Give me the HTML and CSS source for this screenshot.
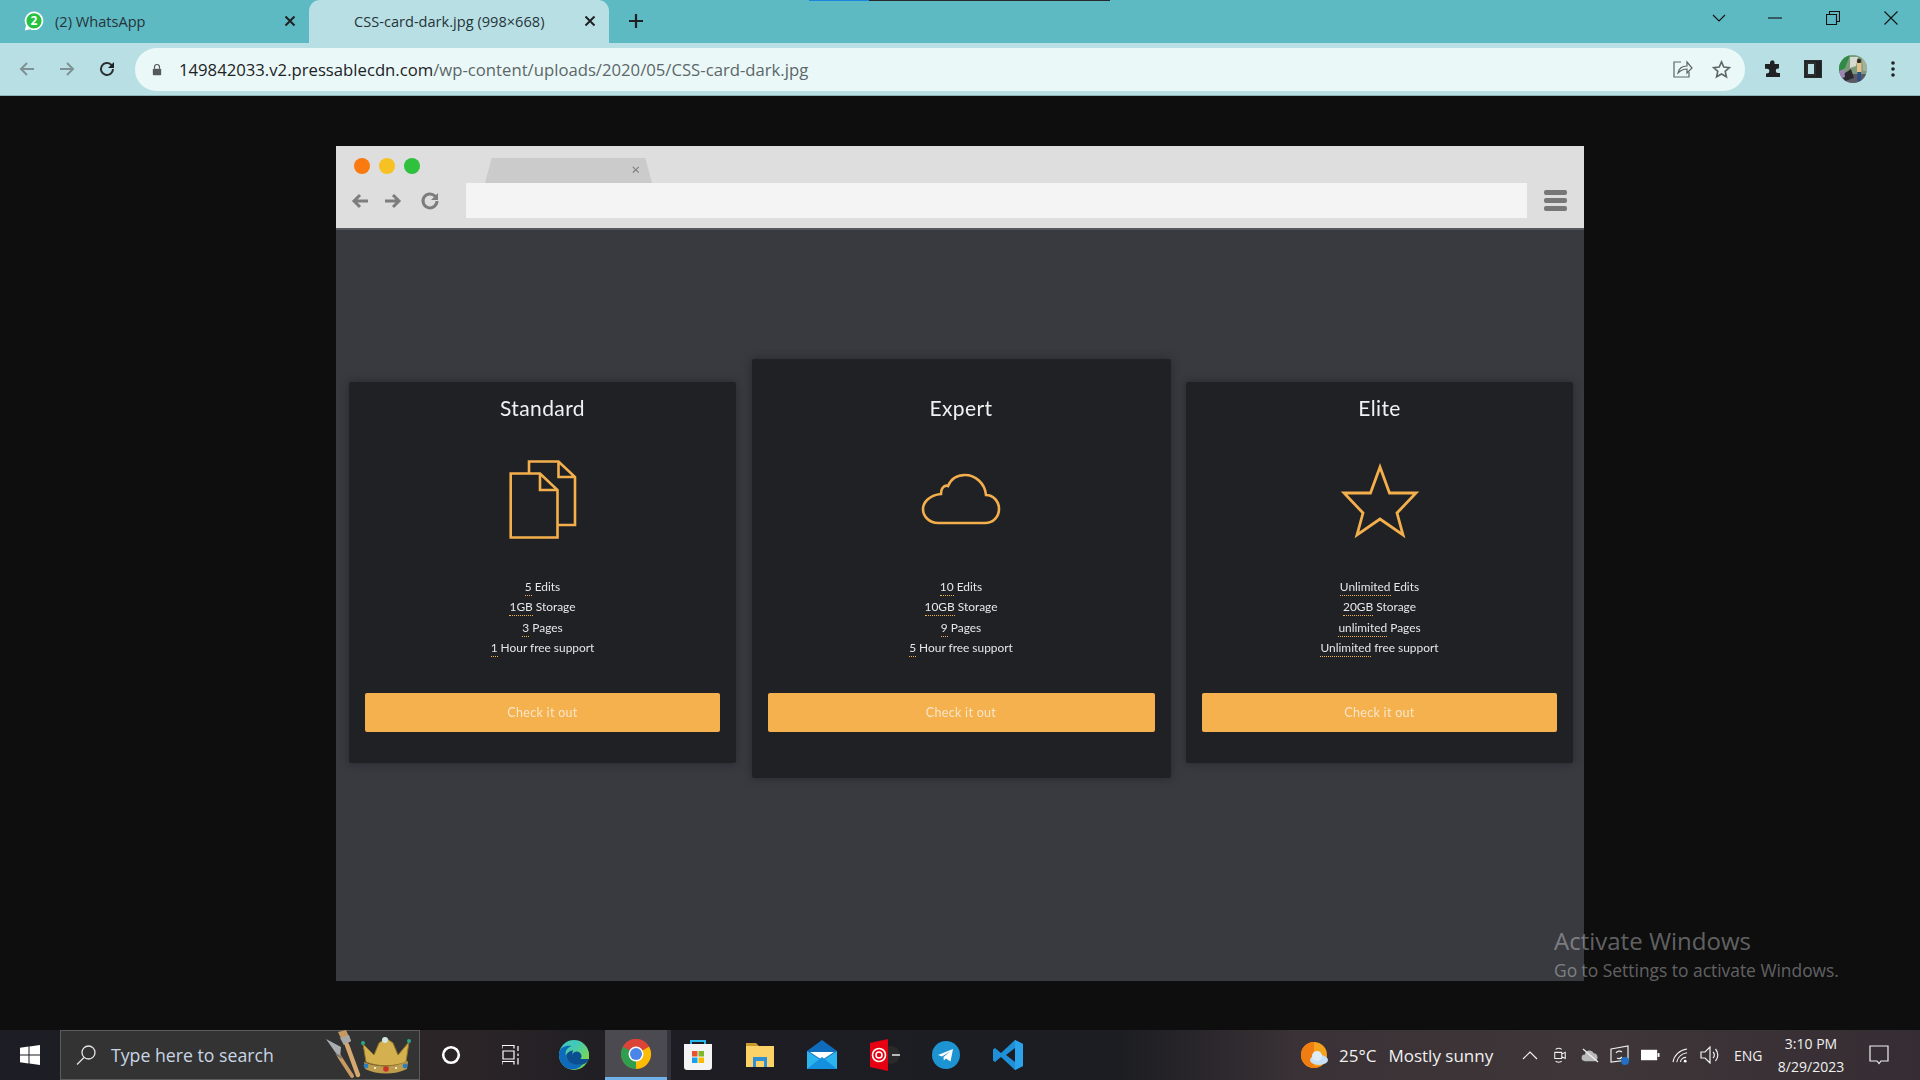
FILE: index.html
```html
<!DOCTYPE html>
<html lang="en">
<head>
<meta charset="utf-8">
<title>CSS-card-dark.jpg (998×668)</title>
<link rel="stylesheet" href="styles.css">
</head>
<body>
<div class="load-line"><span class="load-blue"></span><span class="load-dark"></span></div>

<header class="tabstrip">
  <div class="tab">
    <svg class="favicon" viewBox="0 0 20 20" width="20" height="20"><path d="M10 .5a9.3 9.3 0 0 0-8 14L.8 19.5l5.2-1.3A9.3 9.3 0 1 0 10 .5z" fill="#fff"/><circle cx="10" cy="9.8" r="7.6" fill="#25c13f"/><text x="10" y="14" text-anchor="middle" class="fav-num">2</text></svg>
    <span class="tab-title">(2) WhatsApp</span>
    <svg class="tab-close" viewBox="0 0 12 12" width="12" height="12"><path d="M1.5 1.5l9 9M10.5 1.5l-9 9"/></svg>
  </div>
  <div class="tab tab-active">
    <span class="tab-title">CSS-card-dark.jpg (998×668)</span>
    <svg class="tab-close" viewBox="0 0 12 12" width="12" height="12"><path d="M1.5 1.5l9 9M10.5 1.5l-9 9"/></svg>
  </div>
  <svg class="new-tab" viewBox="0 0 16 16" width="16" height="16"><path d="M8 1v14M1 8h14"/></svg>
  <div class="win-controls">
    <div class="win-btn win-chev"><svg viewBox="0 0 14 8" width="14" height="8"><path d="M1 1l6 6 6-6"/></svg></div>
    <div class="win-btn"><svg viewBox="0 0 14 2" width="14" height="2"><path d="M0 1h14"/></svg></div>
    <div class="win-btn"><svg viewBox="0 0 14 14" width="14" height="14"><path d="M.5 3.5h10v10H.5zM3.5 3.5V.5h10v10h-3"/></svg></div>
    <div class="win-btn"><svg viewBox="0 0 14 14" width="14" height="14"><path d="M.5.5l13 13M13.5.5l-13 13"/></svg></div>
  </div>
</header>

<nav class="toolbar">
  <div class="tool-btn tool-dim"><svg viewBox="0 0 16 16" width="16" height="16"><path d="M15 8H2M8 2L2 8l6 6"/></svg></div>
  <div class="tool-btn tool-dim"><svg viewBox="0 0 16 16" width="16" height="16"><path d="M1 8h13M8 2l6 6-6 6"/></svg></div>
  <div class="tool-btn"><svg viewBox="0 0 16 16" width="16" height="16"><path d="M14 8a6 6 0 1 1-1.8-4.3L14 5.5"/><path class="fill-dark" d="M15 1v6H9z"/></svg></div>
  <div class="omnibox">
    <svg class="lock" viewBox="0 0 12 14" width="10" height="13"><path d="M3 6V4a3 3 0 0 1 6 0v2" fill="none" stroke="#55595a" stroke-width="1.4"/><rect x="1" y="6" width="10" height="8" rx="1" fill="#55595a"/></svg>
    <span class="url"><span class="url-host">149842033.v2.pressablecdn.com</span>/wp-content/uploads/2020/05/CSS-card-dark.jpg</span>
    <svg class="omni-ico share" viewBox="0 0 20 18" width="20" height="18"><path d="M8 2H1v15h15v-5"/><path d="M5 13c1-5 5-7 9-7V2l5 6-5 5V9c-4 0-6 1-9 4z"/></svg>
    <svg class="omni-ico" viewBox="0 0 20 20" width="19" height="19"><path d="M10 2l2.4 5.4 5.9.6-4.4 3.9 1.3 5.8L10 14.7l-5.2 3 1.3-5.8L1.7 8l5.9-.6z"/></svg>
  </div>
  <div class="tool-btn"><svg viewBox="0 0 18 18" width="18" height="18"><path class="fill-dark" d="M7 1a2 2 0 0 1 3.5 1.5V4H15v4.5h-1a2.2 2.2 0 1 0 0 4.5h2V17H2v-3.5h1a2.4 2.4 0 0 0 0-4.8H1V4h5V2.5A2 2 0 0 1 7 1z"/></svg></div>
  <div class="tool-btn"><svg viewBox="0 0 18 18" width="18" height="18"><rect width="18" height="18" rx="1" fill="#202124"/><rect x="3" y="3" width="8" height="12" fill="#b8e0e4"/></svg></div>
  <div class="tool-btn"><svg class="avatar" viewBox="0 0 28 28" width="28" height="28"><defs><clipPath id="av"><circle cx="14" cy="14" r="14"/></clipPath></defs><g clip-path="url(#av)"><rect width="28" height="28" fill="#7c9a7a"/><rect y="19" width="28" height="9" fill="#5c5966"/><path d="M0 0h11L6 13 0 18z" fill="#2f8a45"/><path d="M11 2l8 0-2 9-6 2z" fill="#d4dcd2"/><path d="M3 20l9-6 3 9-9 3z" fill="#2a2a30"/><path d="M0 16l5-2 1 8-6 2z" fill="#a184b8"/><circle cx="20" cy="6" r="2.200" fill="#3a2b22"/><rect x="18" y="8" width="4.400" height="9" fill="#e4c08c"/><rect x="18.400" y="17" width="3.600" height="9" fill="#2b4f86"/><path d="M23 4h5v12h-4z" fill="#a2b19b"/></g></svg></div>
  <div class="tool-btn"><svg viewBox="0 0 4 16" width="4" height="16"><circle class="fill-dark" cx="2" cy="2" r="1.8"/><circle class="fill-dark" cx="2" cy="8" r="1.8"/><circle class="fill-dark" cx="2" cy="14" r="1.8"/></svg></div>
</nav>

<main class="viewer">
  <section class="shot">
    <div class="mock-bar">
      <div class="mock-top">
        <span class="dot dot-red"></span><span class="dot dot-yellow"></span><span class="dot dot-green"></span>
        <div class="mock-tab"><span class="mock-x">×</span></div>
      </div>
      <div class="mock-nav">
        <svg class="mock-ico" viewBox="0 0 18 16" width="18" height="16"><path d="M17 8H3M9 2L3 8l6 6"/></svg>
        <svg class="mock-ico" viewBox="0 0 18 16" width="18" height="16"><path d="M1 8h14M9 2l6 6-6 6"/></svg>
        <svg class="mock-ico mock-reload" viewBox="0 0 20 20" width="20" height="20"><path d="M17 10a7 7 0 1 1-2-5l2 2"/><path class="fill-grey" d="M18 2v7h-7z"/></svg>
        <div class="mock-address"></div>
        <div class="mock-menu"><span></span><span></span><span></span></div>
      </div>
    </div>

    <div class="plans">
      <article class="card">
        <h2 class="card-title">Standard</h2>
        <div class="card-icon">
          <svg viewBox="161 88 84 84" width="84" height="84"><path d="M170.7 103.5H200L217.5 120V167.5H170.7ZM200 103.5V120H217.5M189 103.5V91.5H218.5L235 107V155H217.5M218.5 91.5V107H235"/></svg>
        </div>
        <ul class="features">
          <li><span class="term">5</span> Edits</li>
          <li><span class="term">1GB</span> Storage</li>
          <li><span class="term">3</span> Pages</li>
          <li><span class="term">1</span> Hour free support</li>
        </ul>
        <button class="cta">Check it out</button>
      </article>

      <article class="card card-featured">
        <h2 class="card-title">Expert</h2>
        <div class="card-icon">
          <svg viewBox="0 0 84 84" width="84" height="84"><path d="M19 65H66C75 65 80 58 80 51C80 43 74 37 67 37C66 25 56 17 46 17C38 17 32 21 29 28C27 27 25 28 23.500 30C22 32 22 34 22 36C11 37 4 44 4 51C4 59 11 65 19 65Z"/></svg>
        </div>
        <ul class="features">
          <li><span class="term">10</span> Edits</li>
          <li><span class="term">10GB</span> Storage</li>
          <li><span class="term">9</span> Pages</li>
          <li><span class="term">5</span> Hour free support</li>
        </ul>
        <button class="cta">Check it out</button>
      </article>

      <article class="card">
        <h2 class="card-title">Elite</h2>
        <div class="card-icon">
          <svg viewBox="0 0 84 84" width="84" height="84"><path class="star" d="M42 9L51.500 35H78L59 55L65 77L42 61L19 77L25 55L6 35H32.500Z"/></svg>
        </div>
        <ul class="features">
          <li><span class="term">Unlimited</span> Edits</li>
          <li><span class="term">20GB</span> Storage</li>
          <li><span class="term">unlimited</span> Pages</li>
          <li><span class="term">Unlimited</span> free support</li>
        </ul>
        <button class="cta">Check it out</button>
      </article>
    </div>
  </section>

  <div class="activate">
    <div class="activate-title">Activate Windows</div>
    <div class="activate-sub">Go to Settings to activate Windows.</div>
  </div>
</main>

<footer class="taskbar">
  <div class="start"><svg viewBox="0 0 20 20" width="20" height="20"><path fill="#fff" d="M0 2.800L8.500 1.600V9.500H0ZM9.500 1.500L20 0V9.500H9.500ZM0 10.500H8.500V18.400L0 17.200ZM9.500 10.500H20V20L9.500 18.500Z"/></svg></div>
  <div class="search">
    <svg class="search-ico" viewBox="0 0 20 20" width="20" height="20"><circle cx="12.500" cy="7.500" r="6.500"/><path d="M8 12.500L1 19.500"/></svg>
    <span class="search-text">Type here to search</span>
    <svg class="search-art" viewBox="0 0 90 50" width="90" height="50">
      <path d="M2 9L17 17L16 29Z" fill="#a9aeb3"/><path d="M15 26L28 46" stroke="#c89a62" stroke-width="4" stroke-linecap="round"/><path d="M12 24L18 28" stroke="#777" stroke-width="2"/>
      <path d="M14 2L22 0L27 11L20 15Z" fill="#c49a62"/><path d="M16 8L25 5L27 11L20 15Z" fill="#a8a8a8"/><path d="M23 15L34 45" stroke="#d5a870" stroke-width="4.500" stroke-linecap="round"/>
      <path d="M42 32L39 14L50 25L55 13L62 8L69 13L74 25L85 12L82 32C70 37 54 37 42 32Z" fill="#d4b04f" stroke="#8f7428"/>
      <path d="M40 32C54 38 70 38 84 31L83 39C70 45 54 45 41 39Z" fill="#bd9c4c"/>
      <circle cx="39" cy="13" r="2" fill="#2aa88c"/><circle cx="85" cy="11" r="2" fill="#2aa88c"/><circle cx="61" cy="10" r="3" fill="#cfe6e6"/>
      <circle cx="42" cy="36" r="2.400" fill="#2a7fc0"/><circle cx="62" cy="39" r="2.800" fill="#cc3327"/><circle cx="81" cy="36" r="2.400" fill="#2a7fc0"/>
      <circle cx="51" cy="38" r="1" fill="#fff"/><circle cx="72" cy="38" r="1" fill="#fff"/>
    </svg>
  </div>
  <div class="task-cell"><svg viewBox="0 0 20 20" width="20" height="20"><circle cx="10" cy="10" r="7.800" fill="none" stroke="#fff" stroke-width="2.600"/></svg></div>
  <div class="task-cell"><svg class="line-ico" viewBox="0 0 20 20" width="20" height="20"><path d="M0 .5H12V3.500M12 .5M0 3.500V.5M1 6H12V14H1ZM0 19.500V16.500H12V19.500M16 1V6M16 8.500V11M16 13V19.500"/></svg></div>
  <div class="app-cell"><svg viewBox="0 0 32 32" width="32" height="32"><defs><linearGradient id="ed1" x1="0" y1="0" x2="1" y2="1"><stop offset="0" stop-color="#30c4d8"/><stop offset="1" stop-color="#7fd84a"/></linearGradient></defs><circle cx="16" cy="16" r="15" fill="url(#ed1)"/><path d="M1 16C1 8 8 6 14 7C8 9 7 13 8 17C9 23 16 27 25 25C21 30 16 31 12 30C6 29 1 23 1 16Z" fill="#0e6bbb"/><path d="M8 17C9 12 16 9 21 13C24 15 24 18 23 20H31C30 23 28 24 26 25C20 27 10 26 8 17Z" fill="#0b4f91"/><path d="M14 18a5 5 0 0 1 10-1c0 1.500-1 2.500-2 3h9v-5C30 8 24 2 16 2" fill="url(#ed1)"/></svg></div>
  <div class="app-cell app-active"><svg viewBox="0 0 32 32" width="32" height="32"><circle cx="16" cy="16" r="15" fill="#db4437"/><path d="M16 16L29 8.500A15 15 0 0 1 16 31Z" fill="#fbbc05"/><path d="M16 16L16 31A15 15 0 0 1 3 8.500Z" fill="#2f9e4d"/><path d="M16 16L3 8.500A15 15 0 0 1 29 8.500Z" fill="#db4437"/><circle cx="16" cy="16" r="7.500" fill="#fff"/><circle cx="16" cy="16" r="6" fill="#4a86e8"/></svg></div>
  <div class="app-cell"><svg viewBox="0 0 30 32" width="30" height="32"><path d="M8 6V2H22V6" fill="none" stroke="#29b6e8" stroke-width="2"/><path d="M1 5H29V28a3 3 0 0 1-3 3H4a3 3 0 0 1-3-3Z" fill="#f4f4f4"/><rect x="9" y="12" width="5.500" height="5.500" fill="#e8502f"/><rect x="15.500" y="12" width="5.500" height="5.500" fill="#7db928"/><rect x="9" y="18.500" width="5.500" height="5.500" fill="#18a0e8"/><rect x="15.500" y="18.500" width="5.500" height="5.500" fill="#fbb900"/></svg></div>
  <div class="app-cell"><svg viewBox="0 0 30 28" width="30" height="28"><path d="M1 2H11L14 5H29V26H1Z" fill="#c99a2e"/><path d="M1 5H29V26H1Z" fill="#fbd268"/><path d="M8 26V16H22V26H19V20H11V26Z" fill="#2e8fd4"/></svg></div>
  <div class="app-cell"><svg viewBox="0 0 32 30" width="32" height="30"><path d="M1 11L16 0L31 11V29H1Z" fill="#0f6cbd"/><path d="M4 12H28L16 20Z" fill="#fff"/><path d="M1 11L16 21L31 11V29H1Z" fill="#2cb4ee"/><path d="M1 29L16 17L31 29Z" fill="#1490df"/></svg></div>
  <div class="app-cell"><svg viewBox="0 0 32 32" width="32" height="32"><circle cx="23" cy="16" r="9" fill="#2a2a2a"/><rect x="24" y="15" width="8" height="2" fill="#b9b9b9"/><path d="M2 4L20 0V32L2 28Z" fill="#e60012"/><circle cx="11" cy="16" r="6.500" fill="none" stroke="#fff" stroke-width="1.600"/><circle cx="11" cy="16" r="3" fill="none" stroke="#fff" stroke-width="1.600"/></svg></div>
  <div class="app-cell"><svg viewBox="0 0 28 28" width="28" height="28"><circle cx="14" cy="14" r="14" fill="#1d93d2"/><path d="M6 14L21 8L18.500 20.500L14 17.500L11.800 19.500L11.500 16L18 10.500L10 15.500Z" fill="#fff"/></svg></div>
  <div class="app-cell"><svg viewBox="0 0 32 32" width="32" height="32"><path d="M23 1L31 5V27L23 31L9 18L3 23L1 21.500V10.500L3 9L9 14ZM23 9L14 16L23 23Z" fill="#1f8fd8"/><path d="M23 1L31 5V27L23 31Z" fill="#2aa3ea"/></svg></div>

  <div class="tray">
    <div class="weather">
      <svg viewBox="0 0 28 32" width="28" height="32"><circle cx="13" cy="16" r="13" fill="#f5a31c"/><path d="M13 3a13 13 0 0 0 0 26c3 0 5-1 7-2H13z" fill="#f07d12"/><ellipse cx="18" cy="21" rx="9" ry="5" fill="#c8e0f4"/><circle cx="16" cy="17" r="5" fill="#dcecf8"/></svg>
      <span class="w-temp">25°C</span><span class="w-text">Mostly sunny</span>
    </div>
    <div class="tray-icons">
      <svg viewBox="0 0 16 10" width="16" height="10"><path d="M1 9l7-7 7 7"/></svg>
      <svg viewBox="0 0 16 20" width="14" height="18"><path d="M2 7h8v7H2zM10 9l4-2v7l-4-2M3 3.500c2-1.500 5-1.500 7 0M3 17c2 1.500 5 1.500 7 0"/></svg>
      <svg viewBox="0 0 20 16" width="19" height="15"><path class="fill-tray" d="M4 14a3.500 3.500 0 0 1 0-7 5 5 0 0 1 9.500-1.500A4.500 4.500 0 0 1 15 14Z"/><path class="slash" d="M2 1l16 14"/></svg>
      <svg viewBox="0 0 20 20" width="20" height="20"><path d="M1 4L18 1V15L1 17Z"/><path d="M6 8a4 4 0 0 1 6-1M12 12a4 4 0 0 1-5 1"/><circle class="blue-dot" cx="15" cy="16" r="4"/></svg>
      <svg viewBox="0 0 20 12" width="19" height="12"><rect class="batt-frame" x="1" y="1.500" width="15" height="9"/><rect class="fill-white" x="17.500" y="4" width="2" height="4"/></svg>
      <svg viewBox="0 0 18 16" width="17" height="15"><path d="M1 15C2 8 8 2 16 1M5 15C6 10 10 6 16 5M9 15c0-3 3-5 6-5"/><circle class="fill-white" cx="14" cy="14" r="1.500"/></svg>
      <svg viewBox="0 0 20 18" width="20" height="18"><path d="M1 6H5L10 1V17L5 12H1ZM13 6a4 4 0 0 1 0 6M15.500 3a9 9 0 0 1 0 12"/></svg>
    </div>
    <span class="lang">ENG</span>
    <div class="clock"><span>3:10 PM</span><span>8/29/2023</span></div>
    <div class="notif"><svg viewBox="0 0 20 20" width="20" height="20"><path d="M1 1H19V16H12L10 18.500L8 16H1Z"/></svg></div>
  </div>
</footer>
</body>
</html>
```

FILE: styles.css
```css
* { box-sizing: border-box; }
html, body { height: 100%; }
body {
  margin: 0;
  height: 100vh;
  overflow: hidden;
  display: flex;
  flex-direction: column;
  background: #0e0e0f;
  font-family: "Open Sans", "Liberation Sans", sans-serif;
  color: #202124;
}
svg { display: block; flex: none; }

/* loading line */
.load-line { position: absolute; top: 0; left: 809px; display: flex; height: 1px; z-index: 2; }
.load-blue { width: 60px; background: #1a86e0; }
.load-dark { width: 241px; background: #26282b; }

/* tab strip */
.tabstrip { height: 43px; flex: none; display: flex; align-items: flex-start; background: #5db9c2; }
.tab { width: 309px; height: 43px; padding: 0 13px 2px 24px; display: flex; align-items: center; gap: 11px; font-size: 14.6px; }
.tab-active { width: 300px; padding-left: 45px; background: #b8e0e4; border-radius: 11px 11px 0 0; }
.tab-title { flex: 1; white-space: nowrap; color: #26343a; }
.fav-num { font: 700 12px "Open Sans", sans-serif; fill: #fff; }
.tab-close { fill: none; stroke: #202124; stroke-width: 2; }
.new-tab { margin: 13px 0 0 19px; fill: none; stroke: #202124; stroke-width: 2.2; }
.win-controls { margin-left: auto; display: flex; }
.win-btn { width: 58px; height: 36px; display: flex; align-items: center; justify-content: center; }
.win-btn svg { fill: none; stroke: #111; stroke-width: 1.1; }
.win-chev { width: 56px; margin-right: 0; padding-left: 2px; }

/* toolbar */
.toolbar { height: 53px; flex: none; display: flex; align-items: center; padding: 0 7px; background: #b8e0e4; border-bottom: 1px solid #8fb5b9; }
.tool-btn { width: 40px; height: 40px; flex: none; display: flex; align-items: center; justify-content: center; }
.tool-btn svg { fill: none; stroke: #2c2f30; stroke-width: 2; }
.tool-dim svg { stroke: #7e9294; }
.tool-btn .fill-dark { fill: #202124; stroke: none; }
.tool-btn .avatar { stroke: none; }
.omnibox { flex: 1; height: 43px; margin: 0 8px; display: flex; align-items: center; padding: 0 14px 0 17px; background: #ebf8f8; border-radius: 22px; }
.lock { margin-right: 16px; }
.url { flex: 1; font-size: 16.7px; margin-left: 1px; color: #5c6769; white-space: nowrap; }
.url-host { color: #1c2326; }
.omni-ico { fill: none; stroke: #5f6668; stroke-width: 1.7; margin-left: 19px; }
.share { stroke-width: 1.2; }

/* viewer */
.viewer { flex: 1; min-height: 0; position: relative; }
.shot { width: 1248px; height: 835px; margin: 50px auto 0; background: #393a40; display: flex; flex-direction: column; }

/* mock browser bar */
.mock-bar { height: 84px; flex: none; background: #dedede; border-bottom: 2px solid #56575c; }
.mock-top { height: 37px; display: flex; align-items: center; padding: 2px 0 0 18px; gap: 9px; filter: blur(.5px); }
.dot { width: 16px; height: 16px; border-radius: 50%; }
.dot-red { background: #fb7a0f; }
.dot-yellow { background: #f7c123; }
.dot-green { background: #2fc03e; }
.mock-tab { width: 167px; height: 25px; margin-left: 56px; align-self: flex-end; background: #cbcbcb; border-radius: 6px 6px 0 0; clip-path: polygon(4% 0, 96% 0, 100% 100%, 0 100%); position: relative; }
.mock-x { position: absolute; right: 12px; top: 1px; font-size: 15px; line-height: 20px; color: #777; }
.mock-nav { height: 35px; display: flex; align-items: center; padding-left: 15px; gap: 15px; filter: blur(.5px); }
.mock-ico { fill: none; stroke: #7d7d7d; stroke-width: 3; }
.mock-reload { margin-left: 3px; }
.fill-grey { fill: #7d7d7d; stroke: none; }
.mock-address { width: 1061px; height: 35px; margin-left: 11px; background: #f4f4f4; }
.mock-menu { width: 23px; margin-left: 2px; display: flex; flex-direction: column; gap: 3px; }
.mock-menu span { height: 5px; border-radius: 2px; background: #777; }

/* plans */
.plans { display: flex; align-items: flex-start; gap: 15.5px; padding: 129px 13px 0; filter: blur(.5px); }
.card { width: 387px; flex: none; margin-top: 23px; padding: 11px 16px 31px; background: #202125; border-radius: 2px; box-shadow: 0 0 9px rgba(25,25,28,.55); display: flex; flex-direction: column; align-items: center; }
.card-featured { width: 419px; margin-top: 0; padding: 34px 16px 46px; }
.card-title { margin: 0; font: 400 21px/30px Lato, "Open Sans", sans-serif; letter-spacing: .4px; color: #f1f1f1; }
.card-icon { margin-top: 35px; height: 84px; }
.card-icon svg { fill: none; stroke: #f4af4d; stroke-width: 2.6; }
.card-icon .star { stroke-width: 2.8; stroke-miterlimit: 8; }
.features { list-style: none; margin: 35px 0 0; padding: 0; text-align: center; font: 400 11.9px/20.4px Lato, "Open Sans", sans-serif; color: #e6e6e6; }
.term { border-bottom: 1px dotted #f4af4d; padding-bottom: 1px; }
.cta { width: 100%; height: 39px; margin-top: 34.4px; border: 0; border-radius: 2px; background: #f5b14e; color: #f8e6c8; font: 400 12.5px Lato, "Open Sans", sans-serif; letter-spacing: .3px; }

/* activate watermark */
.activate { position: absolute; left: 1554px; top: 827px; color: rgba(255,255,255,.36); white-space: nowrap; }
.activate-title { font-size: 24px; line-height: 36px; }
.activate-sub { font-size: 17.4px; line-height: 23px; }

/* taskbar */
.taskbar { height: 50px; flex: none; display: flex; color: #fff; background: linear-gradient(90deg, #1c1d25 0, #1d1d24 60px, #2c2528 460px, #1d1d23 640px, #1c1d22 1120px, #3a3236 1300px, #3e3638 1600px, #352d33 1920px); }
.start { width: 60px; display: flex; align-items: center; justify-content: center; }
.search { width: 360px; display: flex; align-items: center; padding-left: 15px; background: #333; border: 1px solid #5c5c5c; position: relative; }
.search-ico { fill: none; stroke: #e6e6e6; stroke-width: 1.3; }
.search-text { margin-left: 15px; font-size: 17.7px; color: #c9d6e3; white-space: nowrap; }
.search-art { position: absolute; right: 5px; top: -1px; }
.task-cell { width: 61.5px; display: flex; align-items: center; justify-content: center; }
.line-ico { fill: none; stroke: #fff; stroke-width: 1.2; }
.app-cell { width: 62px; display: flex; align-items: center; justify-content: center; }
.app-active { background: #4a4a50; border-bottom: 3px solid #6fb1e8; box-shadow: 4px 0 0 #33343b; }

/* tray */
.tray { margin-left: auto; display: flex; align-items: center; width: 620px; flex: none; }
.weather { display: flex; align-items: center; width: 212px; font-size: 17px; color: #f0f0f0; white-space: nowrap; }
.weather svg { margin-left: 1px; }
.w-temp { margin-left: 10px; }
.w-text { margin-left: 12px; }
.tray-icons { display: grid; grid-template-columns: repeat(7, 30px); justify-items: center; align-items: center; width: 222px; padding-left: 3px; }
.tray-icons svg { fill: none; stroke: #f0f0f0; stroke-width: 1.2; }
.tray-icons .fill-tray { fill: #b9b9b9; stroke: none; }
.tray-icons .slash { stroke: #f0f0f0; stroke-width: 1.4; }
.tray-icons .blue-dot { fill: #2270c4; stroke: none; }
.tray-icons .fill-white { fill: #fff; stroke: none; }
.tray-icons .batt-frame { fill: #fff; stroke: #fff; stroke-width: 2; }
.lang { width: 36px; font-size: 14px; color: #f0f0f0; }
.clock { width: 82px; display: flex; flex-direction: column; align-items: center; gap: 5px; font-size: 14px; line-height: 18px; color: #f0f0f0; }
.notif { width: 54px; display: flex; justify-content: center; }
.notif svg { fill: none; stroke: #f0f0f0; stroke-width: 1.2; }
```
